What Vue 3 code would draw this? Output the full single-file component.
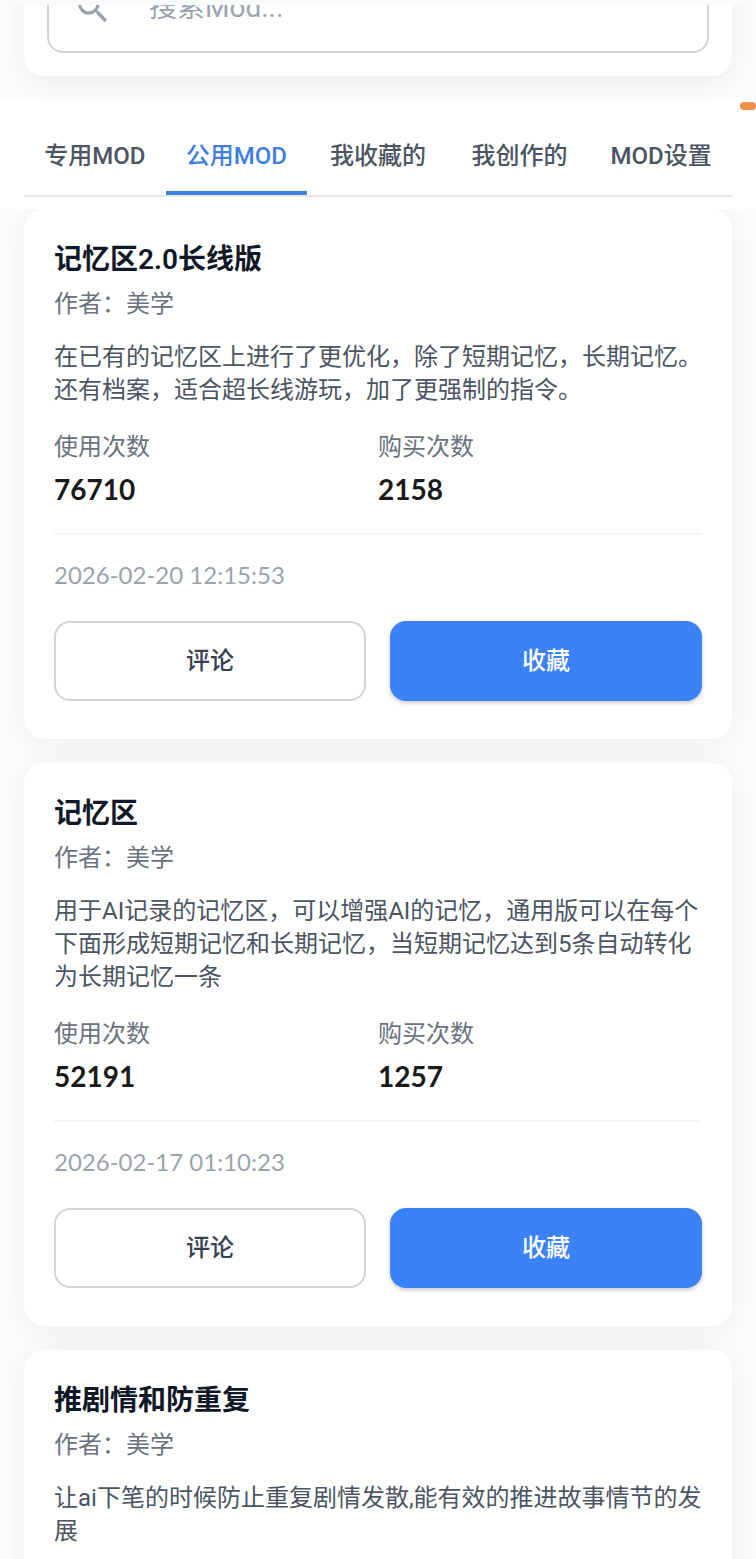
<template>
  <div class="page">
    <div class="topbar"></div>
    <section class="search-area">
      <form class="search-card" @submit.prevent>
        <label class="search-field">
          <svg class="search-icon" viewBox="0 0 24 24" aria-hidden="true">
            <path d="M15.5 14h-.79l-.28-.27A6.47 6.47 0 0 0 16 9.5 6.5 6.5 0 1 0 9.5 16c1.61 0 3.09-.59 4.23-1.57l.27.28v.79l5 4.99L20.49 19l-4.99-5zm-6 0C7.01 14 5 11.99 5 9.5S7.01 5 9.5 5 14 7.01 14 9.5 11.99 14 9.5 14z" />
          </svg>
          <input v-model="keyword" type="text" name="keyword" aria-label="搜索Mod" placeholder="搜索Mod..." autocomplete="off">
        </label>
      </form>
    </section>

    <nav class="tabs">
      <div class="tab-row">
        <button
          v-for="(tab, index) in tabs"
          :key="tab"
          type="button"
          class="tab"
          :class="{ active: index === activeTab }"
          @click="activeTab = index"
        >{{ tab }}</button>
      </div>
      <span class="handle"></span>
    </nav>

    <main class="list">
      <article v-for="mod in mods" :key="mod.title" class="card">
        <h2>{{ mod.title }}</h2>
        <p class="author">作者：美学</p>
        <p class="desc">{{ mod.desc }}</p>
        <template v-if="mod.date">
          <dl class="stats">
            <div>
              <dt>使用次数</dt>
              <dd>{{ mod.used }}</dd>
            </div>
            <div>
              <dt>购买次数</dt>
              <dd>{{ mod.bought }}</dd>
            </div>
          </dl>
          <p class="date">{{ mod.date }}</p>
          <div class="actions">
            <button type="button" class="btn">评论</button>
            <button type="button" class="btn primary">收藏</button>
          </div>
        </template>
      </article>
    </main>
  </div>
</template>

<script setup>
import { ref } from 'vue';

const keyword = ref('');
const activeTab = ref(1);

const tabs = ['专用MOD', '公用MOD', '我收藏的', '我创作的', 'MOD设置'];

const mods = ref([
  {
    title: '记忆区2.0长线版',
    desc: '在已有的记忆区上进行了更优化，除了短期记忆，长期记忆。还有档案，适合超长线游玩，加了更强制的指令。',
    used: 76710,
    bought: 2158,
    date: '2026-02-20 12:15:53'
  },
  {
    title: '记忆区',
    desc: '用于AI记录的记忆区，可以增强AI的记忆，通用版可以在每个下面形成短期记忆和长期记忆，当短期记忆达到5条自动转化为长期记忆一条',
    used: 52191,
    bought: 1257,
    date: '2026-02-17 01:10:23'
  },
  {
    title: '推剧情和防重复',
    desc: '让ai下笔的时候防止重复剧情发散,能有效的推进故事情节的发展'
  }
]);
</script>

<style>
body {
  margin: 0;
  background-color: #fbfcfd;
}
</style>

<style scoped>
.page {
  height: 100vh;
  overflow: hidden;
  background-color: #fbfcfd;
  color: #4b5563;
  font-family: Roboto, "Noto Sans CJK SC", sans-serif;
  font-size: 24px;
  line-height: 32px;
}

.page * {
  box-sizing: border-box;
}

button,
input {
  font: inherit;
}

.topbar {
  height: 5px;
  background-color: #f9fafb;
}

/* scrolled under the top bar, so only the lower part shows */
.search-area {
  display: flex;
  align-items: flex-end;
  height: 95px;
  padding: 0 24px 24px;
  overflow: hidden;
}

.search-card {
  flex: 1;
  padding: 23px;
  border-radius: 20px;
  background-color: #fff;
  box-shadow: 0 8px 32px rgba(31, 41, 55, 0.07);
}

.search-field {
  display: flex;
  align-items: center;
  gap: 36px;
  height: 90px;
  padding: 0 24px;
  border: 2px solid #d1d5db;
  border-radius: 16px;
}

.search-icon {
  flex: none;
  width: 40px;
  height: 40px;
  fill: #9ca3af;
}

.search-field input {
  flex: 1;
  min-width: 0;
  padding: 0;
  border: 0;
  outline: none;
  background: none;
  color: #374151;
  font-size: 28px;
}

.search-field input::placeholder {
  color: #9ca3af;
}

.tabs {
  position: relative;
  padding: 23px 24px 12px;
  background-color: #fff;
}

.tab-row {
  display: grid;
  grid-template-columns: repeat(5, 1fr);
  border-bottom: 2px solid #e5e7eb;
}

.tab {
  padding: 17px 0 19px;
  border: 0;
  border-bottom: 4px solid transparent;
  background: none;
  color: #4b5563;
  font-weight: 500;
  white-space: nowrap;
  cursor: pointer;
}

.tab.active {
  border-bottom-color: #3f7fe2;
  color: #3f7fe2;
}

.handle {
  position: absolute;
  top: 2px;
  right: 0;
  width: 16px;
  height: 8px;
  border-radius: 4px;
  background-color: #ef9150;
}

.list {
  display: flex;
  flex-direction: column;
  gap: 24px;
  padding: 0 24px;
}

.card {
  padding: 33px 30px 38px;
  border-radius: 20px;
  background-color: #fff;
  box-shadow: 0 4px 32px rgba(31, 41, 55, 0.07);
}

h2 {
  margin: 0 0 10px;
  color: #111827;
  font-size: 28px;
  font-weight: 600;
  line-height: 36px;
}

.author {
  margin: 0 0 21px;
  color: #6b7280;
}

.desc {
  margin: 0;
  line-height: 33px;
}

.stats {
  display: grid;
  grid-template-columns: 1fr 1fr;
  margin: 24px 0;
  padding-bottom: 24px;
  border-bottom: 2px solid #f3f4f6;
}

dt {
  margin-bottom: 6px;
  color: #6b7280;
}

dd {
  margin: 0;
  color: #1a1a1a;
  font-family: Lato, sans-serif;
  font-size: 28px;
  font-weight: 700;
  line-height: 40px;
}

.date {
  margin: 0 0 30px;
  color: #9ca3af;
  font-family: Lato, sans-serif;
}

.actions {
  display: grid;
  grid-template-columns: 1fr 1fr;
  gap: 24px;
}

.btn {
  height: 80px;
  border: 2px solid #d1d5db;
  border-radius: 16px;
  background-color: #fff;
  color: #374151;
  font-weight: 500;
  cursor: pointer;
}

.btn.primary {
  border: 0;
  background-color: #3b82f6;
  box-shadow: 0 2px 4px rgba(31, 41, 55, 0.25);
  color: #fff;
}
</style>
